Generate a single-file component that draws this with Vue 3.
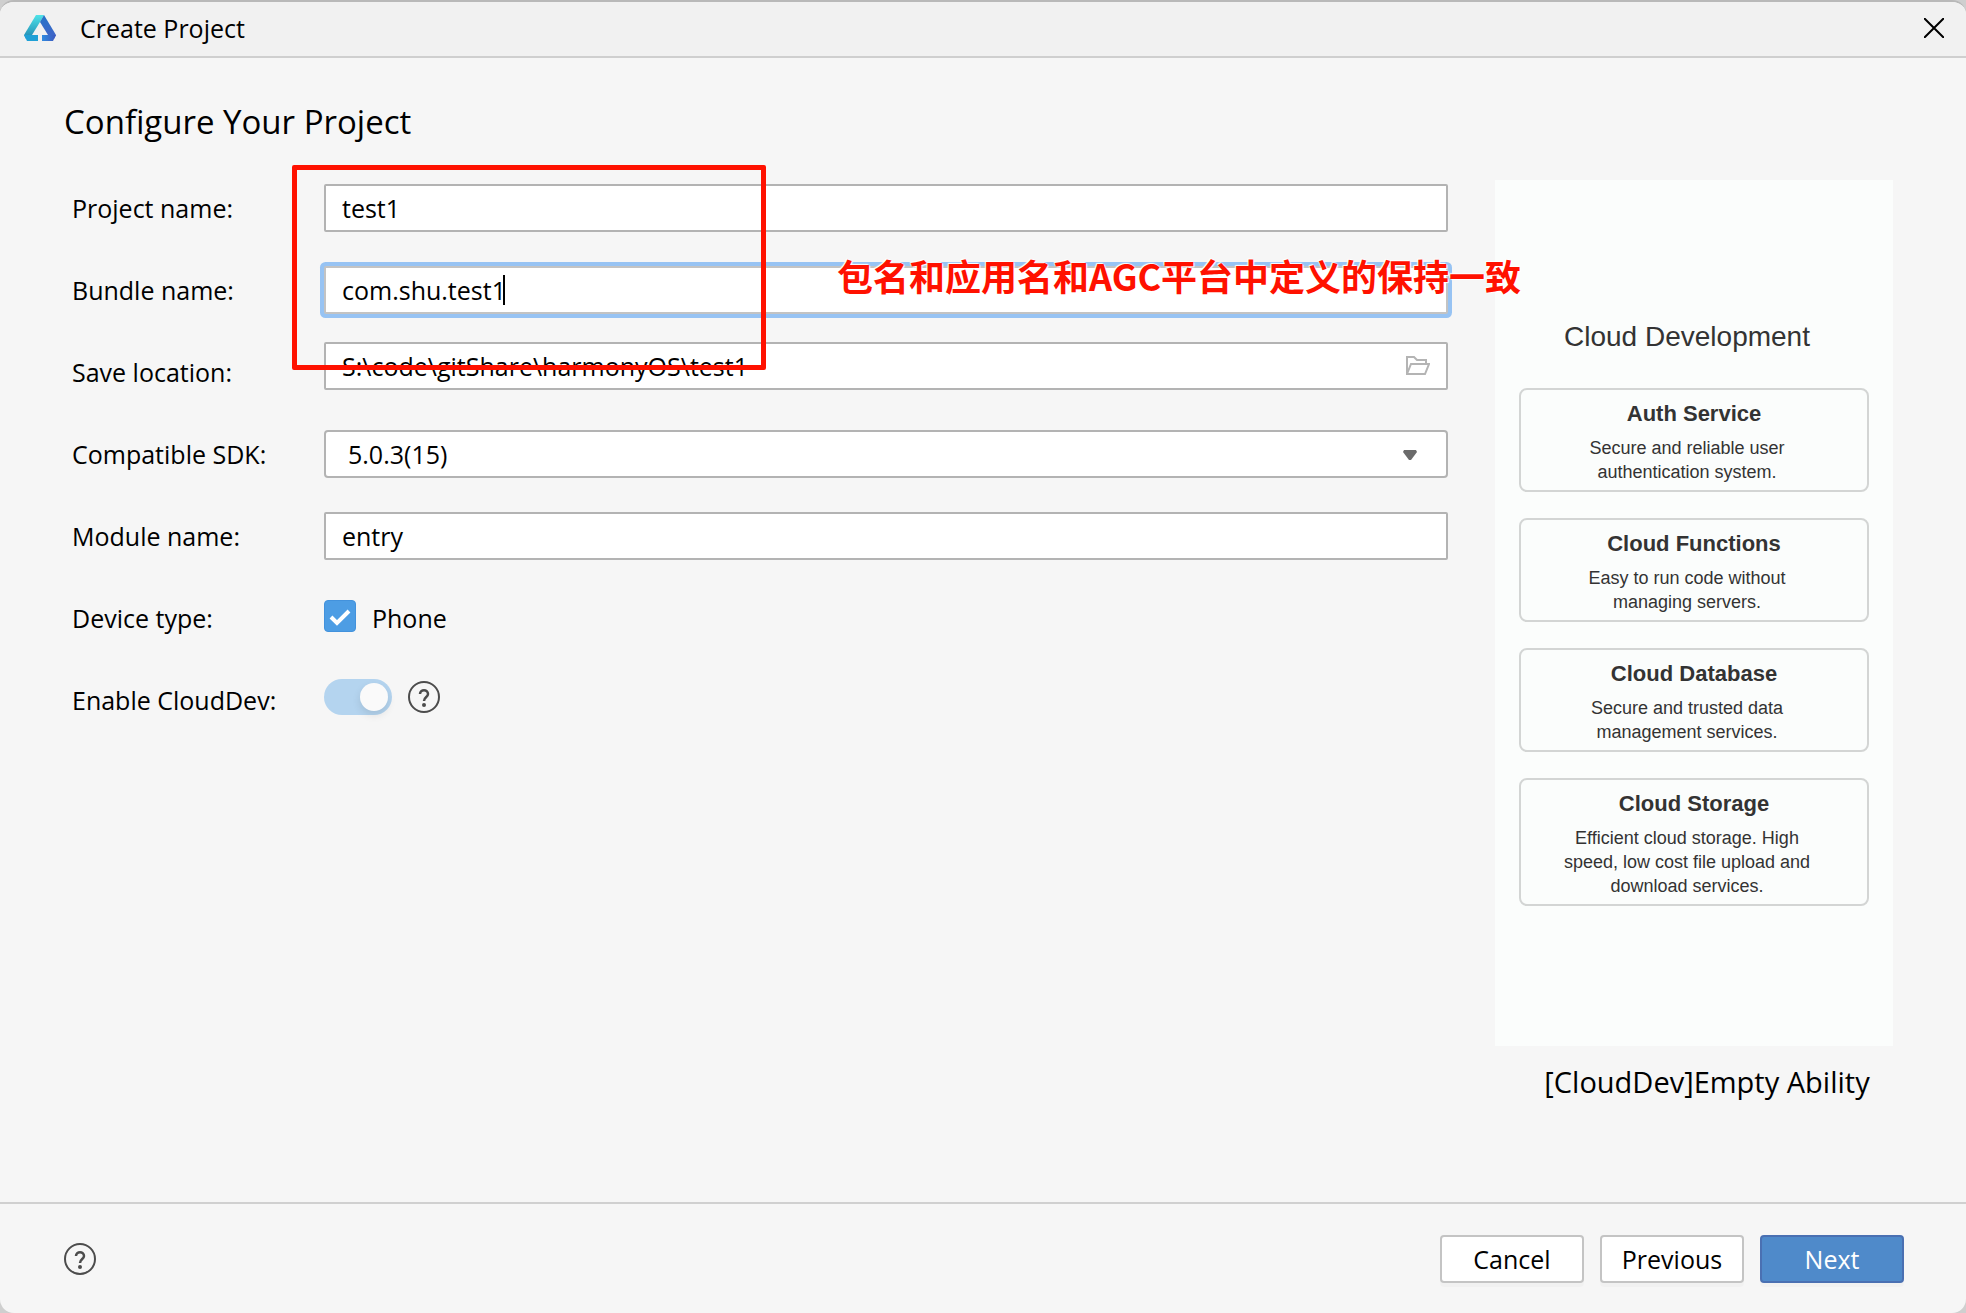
<script setup>
import { ref } from 'vue'

const form = ref({
  project: 'test1',
  bundle: 'com.shu.test1',
  location: 'S:\\code\\gitShare\\harmonyOS\\test1',
  sdk: '5.0.3(15)',
  module: 'entry',
  phone: true,
  cloudDev: true,
})

const services = [
  { title: 'Auth Service', text: 'Secure and reliable user authentication system.' },
  { title: 'Cloud Functions', text: 'Easy to run code without managing servers.' },
  { title: 'Cloud Database', text: 'Secure and trusted data management services.' },
  { title: 'Cloud Storage', text: 'Efficient cloud storage. High speed, low cost file upload and download services.' },
]
</script>

<template>
  <div class="window">
    <header class="titlebar">
      <svg class="logo" viewBox="0 0 32 26" aria-hidden="true">
        <defs>
          <linearGradient id="teal" x1="0" y1="0" x2="0" y2="1">
            <stop offset="0" stop-color="#4fe3e8" />
            <stop offset="1" stop-color="#1f86b0" />
          </linearGradient>
          <linearGradient id="blue" x1="0" y1="0" x2="0" y2="1">
            <stop offset="0" stop-color="#2474c8" />
            <stop offset="1" stop-color="#4463c8" />
          </linearGradient>
          <linearGradient id="foot" x1="0" y1="0" x2="1" y2="0">
            <stop offset="0" stop-color="#2f8be0" />
            <stop offset="1" stop-color="#3f57bd" />
          </linearGradient>
        </defs>
        <path d="M12 0h8l-4 7-8 13-6 4-2-4z" fill="url(#teal)" />
        <path d="M20 0l12 20-2 4-6-4-8-13z" fill="url(#blue)" />
        <path d="M0 20h14v6H3z" fill="#1fa0d6" />
        <path d="M18 20h14l-3 6H18z" fill="url(#foot)" />
      </svg>
      <span class="titlebar-text">Create Project</span>
      <button class="close" type="button" aria-label="Close">
        <svg viewBox="0 0 20 20" width="20" height="20"><path d="M0 0L20 20M20 0L0 20" stroke="#000" stroke-width="2" /></svg>
      </button>
    </header>

    <main>
      <h1>Configure Your Project</h1>
      <div class="content">
        <form class="fields" @submit.prevent>
          <div class="row">
            <label for="project">Project name:</label>
            <input id="project" v-model="form.project" class="box" type="text">
          </div>
          <div class="row">
            <label for="bundle">Bundle name:</label>
            <div class="wrap">
              <input id="bundle" v-model="form.bundle" class="box active" type="text">
              <span class="caret"></span>
            </div>
          </div>
          <div class="row">
            <label for="location">Save location:</label>
            <div class="wrap raised">
              <input id="location" v-model="form.location" class="box" type="text">
              <button class="browse" type="button" aria-label="Browse">
                <svg viewBox="0 0 24 20" width="24" height="20" fill="none" stroke="#b4b4b4" stroke-width="2">
                  <path d="M1 18V1h7l3 3h9v4M1 18L5 8h18l-4 10z" />
                </svg>
              </button>
            </div>
          </div>
          <div class="row">
            <label for="sdk">Compatible SDK:</label>
            <div class="wrap">
              <select id="sdk" v-model="form.sdk" class="box">
                <option>5.0.3(15)</option>
              </select>
              <svg class="arrow" viewBox="0 0 14 10" width="14" height="10"><path d="M1 0h12l1 2-6 8H6L0 2z" fill="#6b6b6b" /></svg>
            </div>
          </div>
          <div class="row">
            <label for="module">Module name:</label>
            <input id="module" v-model="form.module" class="box" type="text">
          </div>
          <div class="row">
            <span class="caption">Device type:</span>
            <div class="check">
              <input id="phone" v-model="form.phone" type="checkbox">
              <svg v-if="form.phone" class="tick" viewBox="0 0 32 32" width="32" height="32"><path d="M7 17l6 6 12-12" fill="none" stroke="#fff" stroke-width="4" /></svg>
              <label for="phone">Phone</label>
            </div>
          </div>
          <div class="row">
            <label for="cloud">Enable CloudDev:</label>
            <div class="toggle">
              <input id="cloud" v-model="form.cloudDev" type="checkbox" role="switch">
              <button class="help" type="button" aria-label="About CloudDev">
                <svg viewBox="0 0 32 32" width="32" height="32" fill="none" stroke="#4c4c4c" stroke-width="2">
                  <circle cx="16" cy="16" r="15" />
                  <path d="M12 13c0-5 8-5 8 0 0 3-4 3-4 7" stroke-width="2.5" />
                  <circle cx="16" cy="24" r="2" fill="#4c4c4c" stroke="none" />
                </svg>
              </button>
            </div>
          </div>
          <div class="mark"></div>
          <p class="note">包名和应用名和AGC平台中定义的保持一致</p>
        </form>

        <aside>
          <section class="preview">
            <h2>Cloud Development</h2>
            <article v-for="s in services" :key="s.title">
              <h3>{{ s.title }}</h3>
              <p>{{ s.text }}</p>
            </article>
          </section>
          <p class="template-name">[CloudDev]Empty Ability</p>
        </aside>
      </div>
    </main>

    <footer>
      <button class="help" type="button" aria-label="Help">
        <svg viewBox="0 0 32 32" width="32" height="32" fill="none" stroke="#4c4c4c" stroke-width="2">
          <circle cx="16" cy="16" r="15" />
          <path d="M12 13c0-5 8-5 8 0 0 3-4 3-4 7" stroke-width="2.5" />
          <circle cx="16" cy="24" r="2" fill="#4c4c4c" stroke="none" />
        </svg>
      </button>
      <div class="actions">
        <button class="btn" type="button">Cancel</button>
        <button class="btn" type="button">Previous</button>
        <button class="btn primary" type="button">Next</button>
      </div>
    </footer>
  </div>
</template>

<style>
body {
  margin: 0;
  background: #cfcfcf;
}
</style>

<style scoped>
* {
  box-sizing: border-box;
}
.window {
  display: flex;
  flex-direction: column;
  min-height: 100vh;
  border-top: 2px solid #b9b9b9;
  border-radius: 14px;
  background: #f6f6f6;
  color: #000;
  font: 25px/32px "Open Sans", "Noto Sans", sans-serif;
  overflow: hidden;
}
button,
input,
select {
  font: inherit;
  color: inherit;
  margin: 0;
}
.titlebar {
  display: flex;
  align-items: center;
  height: 56px;
  padding: 0 22px 2px 24px;
  border-bottom: 2px solid #cfcfcf;
  background: #f1f1f1;
}
.logo {
  width: 32px;
  height: 26px;
  margin-right: 24px;
}
.titlebar-text {
  flex: 1;
}
.close,
.help,
.browse {
  display: flex;
  padding: 0;
  border: 0;
  background: none;
}
main {
  flex: 1;
}
h1 {
  margin: 0;
  padding: 40px 64px 21px;
  font-size: 33px;
  line-height: 48px;
  font-weight: 400;
}
.content {
  display: flex;
  gap: 47px;
  padding: 0 47px 0 72px;
}
.fields {
  position: relative;
  flex: 1;
}
.row {
  display: grid;
  grid-template-columns: 252px 1fr;
  align-items: center;
  height: 82px;
}
.wrap {
  position: relative;
}
.raised {
  margin-bottom: 12px;
}
.box {
  display: block;
  width: 100%;
  height: 48px;
  padding: 0 16px;
  border: 2px solid #b3b3b3;
  border-radius: 2px;
  background: #fff;
  outline: none;
}
select.box {
  appearance: none;
  padding: 0 22px;
  border-radius: 4px;
}
.active {
  border-color: #c3c3c3;
  box-shadow: 0 0 0 4px #97c3f3;
}
.caret {
  position: absolute;
  left: 179px;
  top: 9px;
  width: 2px;
  height: 30px;
  background: #000;
}
.browse {
  position: absolute;
  right: 18px;
  top: 14px;
}
.arrow {
  position: absolute;
  right: 31px;
  top: 20px;
  pointer-events: none;
}
.check {
  position: relative;
  display: flex;
  align-items: center;
  gap: 16px;
}
.check input {
  appearance: none;
  width: 32px;
  height: 32px;
  margin-bottom: 4px;
  border: 1px solid #4392dc;
  border-radius: 4px;
  background: #4d9de4;
}
.tick {
  position: absolute;
  left: 0;
  top: 0;
  pointer-events: none;
}
.toggle {
  display: flex;
  align-items: center;
  gap: 16px;
  margin-bottom: 6px;
}
.toggle input {
  appearance: none;
  display: flex;
  justify-content: flex-end;
  width: 68px;
  height: 36px;
  padding: 4px;
  border-radius: 18px;
  background: #b4d4ef;
}
.toggle input::before {
  content: "";
  width: 28px;
  height: 28px;
  border-radius: 50%;
  background: #fafafa;
  box-shadow: 0 4px 8px rgba(0, 0, 0, 0.1);
}
.mark {
  position: absolute;
  left: 220px;
  top: -2px;
  width: 474px;
  height: 205px;
  border: 5px solid #ff1100;
  border-radius: 2px;
  pointer-events: none;
}
.note {
  position: absolute;
  left: 765px;
  top: 84px;
  margin: 0;
  color: #ff1100;
  font: 700 36px/48px "Noto Sans CJK SC", sans-serif;
  white-space: nowrap;
  text-shadow: 0 0 2px #fff, 1px 1px 1px #fff, -1px -1px 1px #fff;
}
aside {
  width: 424px;
  padding-top: 13px;
}
.preview {
  display: flex;
  flex-direction: column;
  gap: 26px;
  width: 398px;
  height: 866px;
  padding: 141px 24px 0;
  background: #fbfdfc;
  color: #333;
  font-family: "Liberation Sans", Arial, sans-serif;
  text-align: center;
}
h2 {
  margin: 0 14px 9px 0;
  font-size: 28px;
  line-height: 32px;
  font-weight: 400;
}
article {
  padding: 10px 42px 6px 28px;
  border: 2px solid #d3d5d4;
  border-radius: 8px;
}
h3 {
  margin: 0 -14px 8px 0;
  font-size: 22px;
  line-height: 28px;
}
article p {
  margin: 0;
  font-size: 18px;
  line-height: 24px;
}
.template-name {
  margin: 16px 0 0;
  font-size: 29px;
  line-height: 40px;
  text-align: center;
}
footer {
  display: flex;
  align-items: center;
  justify-content: space-between;
  height: 111px;
  padding: 0 62px 0 64px;
  border-top: 2px solid #d0d0d0;
}
.actions {
  display: flex;
  gap: 16px;
}
.btn {
  width: 144px;
  height: 48px;
  padding: 0;
  border: 2px solid #c4c4c4;
  border-radius: 4px;
  background: #fff;
  box-shadow: 0 4px 0 rgba(0, 0, 0, 0.02);
}
.primary {
  border-color: #4a70b2;
  background: #4f8aca;
  color: #fff;
}
</style>
